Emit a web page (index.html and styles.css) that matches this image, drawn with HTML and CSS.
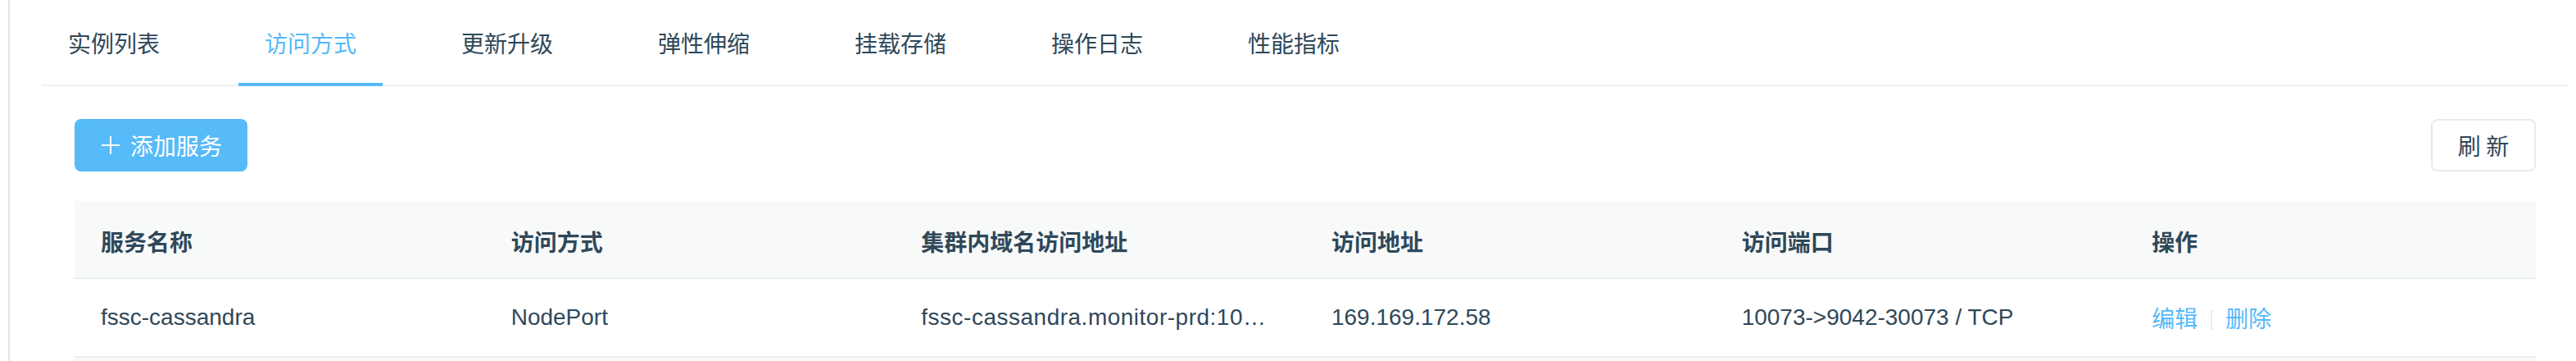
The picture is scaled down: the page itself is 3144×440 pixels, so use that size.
FILE: index.html
```html
<!DOCTYPE html>
<html lang="zh-CN">
<head>
<meta charset="utf-8">
<title>访问方式</title>
<link rel="stylesheet" href="styles.css">
</head>
<body>
<div class="frame">
  <div class="panel">
    <nav class="tabs">
      <div class="tab">实例列表</div>
      <div class="tab active">访问方式</div>
      <div class="tab">更新升级</div>
      <div class="tab">弹性伸缩</div>
      <div class="tab">挂载存储</div>
      <div class="tab">操作日志</div>
      <div class="tab">性能指标</div>
    </nav>
    <div class="content">
      <div class="toolbar">
        <button class="btn btn-primary">
          <svg class="plus" width="22" height="22" viewBox="0 0 22 22"><path d="M11 0V22M0 11H22" stroke="#fff" stroke-width="2" fill="none"/></svg>
          <span>添加服务</span>
        </button>
        <button class="btn btn-default">刷 新</button>
      </div>
      <table class="grid">
        <thead>
          <tr>
            <th>服务名称</th>
            <th>访问方式</th>
            <th>集群内域名访问地址</th>
            <th>访问地址</th>
            <th>访问端口</th>
            <th>操作</th>
          </tr>
        </thead>
        <tbody>
          <tr>
            <td>fssc-cassandra</td>
            <td>NodePort</td>
            <td><div class="ellipsis">fssc-cassandra.monitor-prd:10073</div></td>
            <td>169.169.172.58</td>
            <td>10073-&gt;9042-30073 / TCP</td>
            <td><span class="link">编辑</span><span class="sep"></span><span class="link">删除</span></td>
          </tr>
        </tbody>
      </table>
      <div class="tail"></div>
    </div>
  </div>
</div>
</body>
</html>
```

FILE: styles.css
```css
html, body {
  margin: 0;
  padding: 0;
  background: #ffffff;
}
body {
  font-family: "Liberation Sans", "Noto Sans CJK SC", sans-serif;
  font-size: 28px;
  color: #2f4859;
}
.frame {
  margin-left: 10px;
  border-left: 2px solid #dfe6ea;
  height: 440px;
  padding-left: 39px;
  padding-right: 9px;
  box-sizing: border-box;
  overflow: hidden;
}
.panel {
  width: 100%;
}
.tabs {
  display: flex;
  height: 103px;
  border-bottom: 2px solid #eeeff0;
}
.tab {
  height: 101px;
  line-height: 104px;
  padding: 0 32px;
  margin-right: 64px;
  border-bottom: 4px solid transparent;
  font-family: "Noto Sans CJK SC", sans-serif;
  color: #2f4859;
  white-space: nowrap;
}
.tab.active {
  color: #56b9f9;
  border-bottom-color: #56b9f9;
}
.content {
  padding: 40px 40px 0 40px;
}
.toolbar {
  display: flex;
  justify-content: space-between;
  align-items: center;
  margin-bottom: 36px;
}
.btn {
  height: 64px;
  border-radius: 8px;
  font-family: "Noto Sans CJK SC", sans-serif;
  font-size: 28px;
  display: flex;
  align-items: center;
  box-sizing: border-box;
  white-space: nowrap;
  cursor: pointer;
}
.btn-primary {
  background: #57bbf9;
  border: none;
  color: #ffffff;
  padding: 0 31px 0 33px;
}
.btn-primary .plus {
  margin-right: 13px;
  flex: none;
}
.btn-default {
  background: #ffffff;
  border: 2px solid #e6ebed;
  color: #2f4859;
  width: 128px;
  justify-content: center;
  padding: 0;
}
.grid {
  width: 100%;
  border-collapse: collapse;
  table-layout: fixed;
}
.grid th, .grid td {
  text-align: left;
  padding: 0 32px;
  white-space: nowrap;
  overflow: hidden;
}
.grid th {
  height: 94px;
  padding-top: 4px;
  box-sizing: border-box;
  background: #f8fafa;
  font-family: "Noto Sans CJK SC", sans-serif;
  font-weight: 700;
  border-bottom: 2px solid #eaeeef;
}
.grid td {
  height: 94px;
  border-bottom: 2px solid #eceeef;
}
.ellipsis {
  overflow: hidden;
  text-overflow: ellipsis;
  white-space: nowrap;
  letter-spacing: 0.5px;
}
.link {
  color: #56b9f9;
  font-family: "Noto Sans CJK SC", sans-serif;
}
.sep {
  display: inline-block;
  width: 2px;
  height: 24px;
  background: #e8ecee;
  margin: 0 16px;
  vertical-align: -3px;
}
.tail {
  height: 10px;
  background: #f8f9f9;
}
```
